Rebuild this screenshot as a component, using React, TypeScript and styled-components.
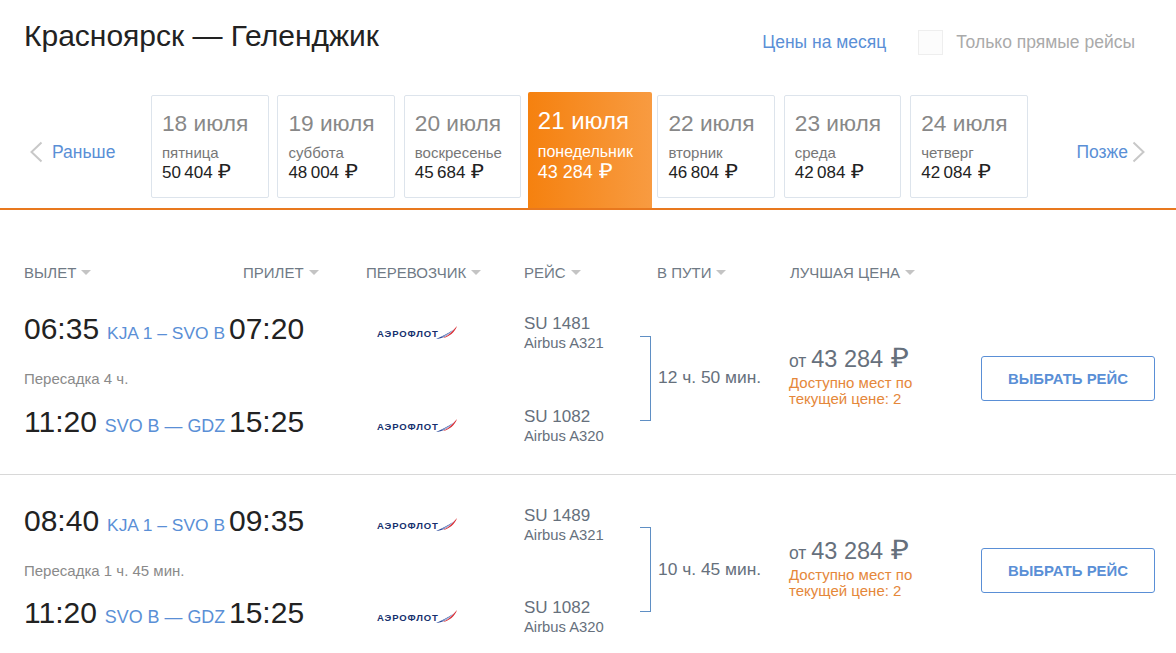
import React from "react";
import styled, { createGlobalStyle } from "styled-components";

const GlobalStyle = createGlobalStyle`
  html, body {
    margin: 0;
    padding: 0;
    overflow: hidden;
    background: #fff;
    font-family: "Liberation Sans", Arial, sans-serif;
  }
`;

const Page = styled.div`
  width: 1176px;
  height: 653px;
  overflow: hidden;
`;

const TopBar = styled.div`
  display: flex;
  align-items: flex-start;
  height: 92px;
  padding: 0 41px 0 24px;
  box-sizing: border-box;
`;

const Title = styled.h1`
  margin: 18px 0 0;
  font-size: 30px;
  line-height: 36px;
  font-weight: 400;
  color: #222;
  flex: 1;
`;

const MonthLink = styled.a`
  margin-top: 32px;
  font-size: 17.5px;
  line-height: 20px;
  color: #5a8fd6;
`;

const DirectOnly = styled.label`
  display: flex;
  align-items: center;
  gap: 13px;
  margin: 30px 0 0 32px;
  font-size: 17.5px;
  color: #aaa;
`;

const CheckBox = styled.span`
  width: 25px;
  height: 25px;
  box-sizing: border-box;
  border: 1px solid #eee;
  background: #fcfcfc;
`;

const DateStrip = styled.div`
  display: flex;
  align-items: flex-start;
  height: 118px;
  padding: 0 30px 0 29px;
  box-sizing: border-box;
  border-bottom: 2px solid #e8781e;
`;

const NavLink = styled.a<{ $next?: boolean }>`
  display: flex;
  align-items: center;
  gap: ${(p) => (p.$next ? "4px" : "9px")};
  height: 24px;
  margin-top: 48px;
  font-size: 17.5px;
  color: #5a8fd6;
  width: ${(p) => (p.$next ? "auto" : "122px")};
  margin-left: ${(p) => (p.$next ? "auto" : "0")};
  svg {
    flex: none;
  }
`;

const Cards = styled.div`
  display: flex;
  gap: 8.8px;
`;

const DateCard = styled.div<{ $active?: boolean }>`
  width: ${(p) => (p.$active ? "124px" : "117.6px")};
  height: ${(p) => (p.$active ? "116px" : "103px")};
  margin: ${(p) => (p.$active ? "0 -3.2px 0 -2.4px" : "3px 0 0")};
  padding: ${(p) => (p.$active ? "15px 0 0 10px" : "13px 0 0 10px")};
  box-sizing: border-box;
  border: ${(p) => (p.$active ? "none" : "1px solid #dde4ec")};
  border-radius: 2px 2px 0 0;
  border-bottom-left-radius: ${(p) => (p.$active ? "0" : "2px")};
  border-bottom-right-radius: ${(p) => (p.$active ? "0" : "2px")};
  background: ${(p) =>
    p.$active ? "linear-gradient(90deg, #f5810f, #f89b41)" : "#fff"};
  color: ${(p) => (p.$active ? "#fff" : "#222")};
`;

const CardDate = styled.div<{ $active?: boolean }>`
  font-size: ${(p) => (p.$active ? "24px" : "22.7px")};
  line-height: 28px;
  color: ${(p) => (p.$active ? "#fff" : "#888")};
`;

const CardDay = styled.div<{ $active?: boolean }>`
  margin-top: ${(p) => (p.$active ? "8px" : "7px")};
  font-size: ${(p) => (p.$active ? "16px" : "15px")};
  line-height: 18px;
  color: ${(p) => (p.$active ? "#fff" : "#777")};
`;

const CardPrice = styled.div<{ $active?: boolean }>`
  font-size: ${(p) => (p.$active ? "18px" : "17px")};
  line-height: 20px;
`;

const Ruble = styled.span`
  display: inline-block;
  margin-left: 2px;
  font-size: 1.15em;
  line-height: 1;
  transform: scaleX(1.15);
`;

const HeaderRow = styled.div`
  display: grid;
  grid-template-columns: 219px 123px 158px 133px 133px auto;
  padding: 54px 0 0 24px;
  height: 38px;
`;

const HeadCell = styled.div`
  display: flex;
  align-items: center;
  gap: 5px;
  height: 16px;
  font-size: 15px;
  color: #707a85;
`;

const Caret = styled.span`
  width: 0;
  height: 0;
  border-left: 5.5px solid transparent;
  border-right: 5.5px solid transparent;
  border-top: 5px solid #c4c4c4;
`;

const FlightRow = styled.div<{ $first?: boolean }>`
  display: flex;
  align-items: flex-start;
  height: ${(p) => (p.$first ? "173px" : "178px")};
  box-sizing: border-box;
  padding: ${(p) => (p.$first ? "5px 21px 0 24px" : "24px 21px 0 24px")};
  border-bottom: ${(p) => (p.$first ? "1px solid #d8d8d8" : "none")};
`;

const Legs = styled.div`
  width: 616px;
  flex: none;
`;

const Leg = styled.div`
  display: grid;
  grid-template-columns: 205px 137px 158px auto;
  align-items: start;
  height: 44px;
`;

const Times = styled.div`
  display: flex;
  align-items: baseline;
  white-space: nowrap;
  font-size: 30px;
  line-height: 44px;
  color: #222;
`;

const Route = styled.span<{ $wide?: boolean }>`
  margin-left: 8px;
  font-size: ${(p) => (p.$wide ? "17.9px" : "17.4px")};
  color: #5a8fd6;
`;

const ArrivalTime = styled.div`
  font-size: 30px;
  line-height: 44px;
  color: #222;
`;

const CarrierLogo = styled.div`
  display: flex;
  align-items: center;
  height: 16px;
  margin: 18px 0 0 11px;
  color: #16306e;
  svg {
    margin-left: -3px;
  }
`;

const LogoWord = styled.span`
  font-size: 9.5px;
  font-weight: 700;
  letter-spacing: 0.9px;
  white-space: nowrap;
`;

const FlightInfo = styled.div`
  color: #66707c;
  padding-top: 7px;
`;

const FlightNo = styled.div`
  font-size: 17px;
  line-height: 19px;
`;

const Aircraft = styled.div`
  font-size: 14.8px;
  line-height: 20px;
`;

const Transfer = styled.div<{ $short?: boolean }>`
  height: ${(p) => (p.$short ? "48px" : "49px")};
  padding-top: 19px;
  box-sizing: border-box;
  font-size: 15px;
  line-height: 18px;
  color: #8a8a8a;
`;

const Bracket = styled.div<{ $first?: boolean }>`
  width: 11px;
  height: 85px;
  margin-top: ${(p) => (p.$first ? "29px" : "28px")};
  box-sizing: border-box;
  border: 1px solid #5f8fc4;
  border-left: none;
`;

const Duration = styled.div`
  width: 131px;
  margin: 59px 0 0 7px;
  flex: none;
  font-size: 17.4px;
  line-height: 22px;
  color: #66707c;
`;

const PriceBox = styled.div`
  width: 192px;
  margin-top: 38px;
  flex: none;
`;

const Price = styled.div`
  font-size: 17.5px;
  line-height: 28px;
  color: #66707c;
  strong {
    font-size: 23.5px;
    font-weight: 400;
  }
`;

const SeatsNote = styled.div`
  font-size: 15px;
  line-height: 16px;
  color: #e5873a;
`;

const SelectButton = styled.button`
  width: 174px;
  height: 45px;
  margin-top: 49px;
  flex: none;
  border: 1px solid #5a8fd6;
  border-radius: 3px;
  background: #fff;
  font-family: inherit;
  font-size: 14.9px;
  font-weight: 700;
  color: #5a8fd6;
`;

const Chevron = ({ left }: { left?: boolean }) => (
  <svg width="14" height="22" viewBox="0 0 14 22" fill="none">
    <path
      d={left ? "M12.5 1.5 2.5 11l10 9.5" : "M1.5 1.5 11.5 11l-10 9.5"}
      stroke="#c8c8c8"
      strokeWidth="2"
    />
  </svg>
);

const Logo = () => (
  <CarrierLogo>
    <LogoWord>АЭРОФЛОТ</LogoWord>
    <svg width="21" height="14" viewBox="0 0 21 14">
      <path d="M0 13 C6 10 11 8 17 4 C12 10 6 12.5 0 13Z" fill="#2b4b9b" />
      <path d="M5 11 C10 9 14 7 19 2 C15 8 10 10.5 5 11Z" fill="#b7c3e2" />
      <path d="M7 12 C12 10 17 5 21 0 C19 6 13 11 7 12Z" fill="#d8232a" />
    </svg>
  </CarrierLogo>
);

const days = [
  { date: "18 июля", day: "пятница", price: "50\u2009404" },
  { date: "19 июля", day: "суббота", price: "48\u2009004" },
  { date: "20 июля", day: "воскресенье", price: "45\u2009684" },
  { date: "21 июля", day: "понедельник", price: "43 284", active: true },
  { date: "22 июля", day: "вторник", price: "46\u2009804" },
  { date: "23 июля", day: "среда", price: "42\u2009084" },
  { date: "24 июля", day: "четверг", price: "42\u2009084" },
];

const columns = ["ВЫЛЕТ", "ПРИЛЕТ", "ПЕРЕВОЗЧИК", "РЕЙС", "В ПУТИ", "ЛУЧШАЯ ЦЕНА"];

const flights = [
  {
    first: { dep: "06:35", arr: "07:20", no: "SU 1481", plane: "Airbus A321" },
    transfer: "Пересадка 4 ч.",
    second: { no: "SU 1082", plane: "Airbus A320" },
    duration: "12 ч. 50 мин.",
  },
  {
    first: { dep: "08:40", arr: "09:35", no: "SU 1489", plane: "Airbus A321" },
    transfer: "Пересадка 1 ч. 45 мин.",
    second: { no: "SU 1082", plane: "Airbus A320" },
    duration: "10 ч. 45 мин.",
  },
];

const App = () => {
  return (
    <Page>
      <GlobalStyle />
      <TopBar>
        <Title>Красноярск — Геленджик</Title>
        <MonthLink>Цены на месяц</MonthLink>
        <DirectOnly>
          <CheckBox />
          Только прямые рейсы
        </DirectOnly>
      </TopBar>

      <DateStrip>
        <NavLink>
          <Chevron left />
          <span>Раньше</span>
        </NavLink>
        <Cards>
          {days.map((d) => (
            <DateCard key={d.date} $active={d.active}>
              <CardDate $active={d.active}>{d.date}</CardDate>
              <CardDay $active={d.active}>{d.day}</CardDay>
              <CardPrice $active={d.active}>
                {d.price} <Ruble>₽</Ruble>
              </CardPrice>
            </DateCard>
          ))}
        </Cards>
        <NavLink $next>
          <span>Позже</span>
          <Chevron />
        </NavLink>
      </DateStrip>

      <HeaderRow>
        {columns.map((c) => (
          <HeadCell key={c}>
            {c}
            <Caret />
          </HeadCell>
        ))}
      </HeaderRow>

      {flights.map((f, i) => (
        <FlightRow key={f.first.no} $first={i === 0}>
          <Legs>
            <Leg>
              <Times>
                {f.first.dep}
                <Route>KJA 1 – SVO B</Route>
              </Times>
              <ArrivalTime>{f.first.arr}</ArrivalTime>
              <Logo />
              <FlightInfo>
                <FlightNo>{f.first.no}</FlightNo>
                <Aircraft>{f.first.plane}</Aircraft>
              </FlightInfo>
            </Leg>
            <Transfer $short={i === 1}>{f.transfer}</Transfer>
            <Leg>
              <Times>
                11:20
                <Route $wide>SVO B — GDZ</Route>
              </Times>
              <ArrivalTime>15:25</ArrivalTime>
              <Logo />
              <FlightInfo>
                <FlightNo>{f.second.no}</FlightNo>
                <Aircraft>{f.second.plane}</Aircraft>
              </FlightInfo>
            </Leg>
          </Legs>
          <Bracket $first={i === 0} />
          <Duration>{f.duration}</Duration>
          <PriceBox>
            <Price>
              от <strong>43 284 <Ruble>₽</Ruble></strong>
            </Price>
            <SeatsNote>
              Доступно мест по
              <br />
              текущей цене: 2
            </SeatsNote>
          </PriceBox>
          <SelectButton>ВЫБРАТЬ РЕЙС</SelectButton>
        </FlightRow>
      ))}
    </Page>
  );
};

export default App;
